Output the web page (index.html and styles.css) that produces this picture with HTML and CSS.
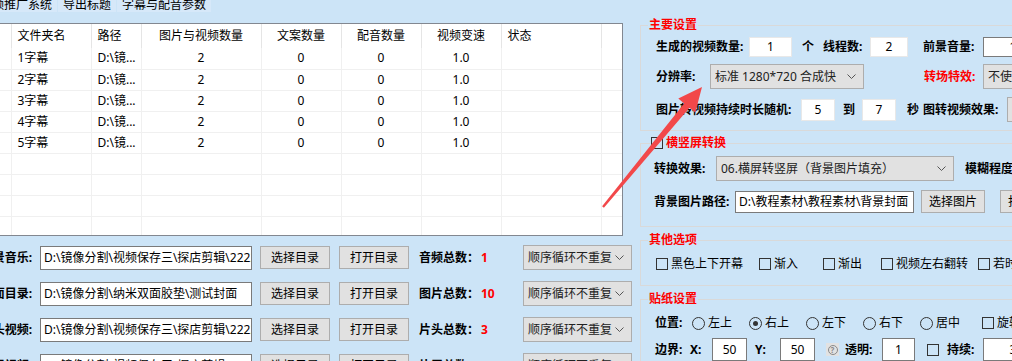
FILE: index.html
```html
<!DOCTYPE html>
<html lang="zh-CN">
<head>
  <meta charset="UTF-8" />
  <title>短视频批量合成</title>
  <link rel="stylesheet" href="styles.css">
</head>
<body>
<div class="app">

  <div class="left">
    <div class="tabs">
      <div class="tab tab-cut"><span>短视频推广系统</span></div>
      <div class="tab">导出标题</div>
      <div class="tab">字幕与配音参数</div>
    </div>

    <div class="grid">
      <table>
        <colgroup>
          <col class="c-head"><col class="c-name"><col class="c-path"><col class="c-media">
          <col class="c-num"><col class="c-num"><col class="c-num"><col class="c-state"><col class="c-fill">
        </colgroup>
        <thead>
          <tr>
            <th></th><th class="l">文件夹名</th><th class="l">路径</th><th>图片与视频数量</th>
            <th>文案数量</th><th>配音数量</th><th>视频变速</th><th class="l">状态</th><th class="fill"></th>
          </tr>
        </thead>
        <tbody>
          <tr><td></td><td class="l">1字幕</td><td class="l">D:\镜...</td><td>2</td><td>0</td><td>0</td><td>1.0</td><td></td><td class="fill"></td></tr>
          <tr><td></td><td class="l">2字幕</td><td class="l">D:\镜...</td><td>2</td><td>0</td><td>0</td><td>1.0</td><td></td><td class="fill"></td></tr>
          <tr><td></td><td class="l">3字幕</td><td class="l">D:\镜...</td><td>2</td><td>0</td><td>0</td><td>1.0</td><td></td><td class="fill"></td></tr>
          <tr><td></td><td class="l">4字幕</td><td class="l">D:\镜...</td><td>2</td><td>0</td><td>0</td><td>1.0</td><td></td><td class="fill"></td></tr>
          <tr><td></td><td class="l">5字幕</td><td class="l">D:\镜...</td><td>2</td><td>0</td><td>0</td><td>1.0</td><td></td><td class="fill"></td></tr>
          <tr><td></td><td></td><td></td><td></td><td></td><td></td><td></td><td></td><td class="fill"></td></tr>
          <tr><td></td><td></td><td></td><td></td><td></td><td></td><td></td><td></td><td class="fill"></td></tr>
          <tr><td></td><td></td><td></td><td></td><td></td><td></td><td></td><td></td><td class="fill"></td></tr>
          <tr><td></td><td></td><td></td><td></td><td></td><td></td><td></td><td></td><td class="fill"></td></tr>
          <tr><td></td><td></td><td></td><td></td><td></td><td></td><td></td><td></td><td class="fill"></td></tr>
        </tbody>
      </table>
    </div>

    <div class="dirs">
      <div class="dir">
        <span class="dir-label"><span>背景音乐:</span></span>
        <span class="tb text w212">D:\镜像分割\视频保存三\探店剪辑\2222</span>
        <span class="btn w70">选择目录</span>
        <span class="btn w70">打开目录</span>
        <span class="lbl">音频总数：</span>
        <span class="val">1</span>
        <span class="combo w109">顺序循环不重复<svg width="9" height="5" viewBox="0 0 9 5"><polyline points="0.5,0.5 4.5,4.5 8.5,0.5" fill="none" stroke="#555" stroke-width="1"/></svg></span>
      </div>
      <div class="dir">
        <span class="dir-label"><span>封面目录:</span></span>
        <span class="tb text w212">D:\镜像分割\纳米双面胶垫\测试封面</span>
        <span class="btn w70">选择目录</span>
        <span class="btn w70">打开目录</span>
        <span class="lbl">图片总数：</span>
        <span class="val">10</span>
        <span class="combo w109">顺序循环不重复<svg width="9" height="5" viewBox="0 0 9 5"><polyline points="0.5,0.5 4.5,4.5 8.5,0.5" fill="none" stroke="#555" stroke-width="1"/></svg></span>
      </div>
      <div class="dir">
        <span class="dir-label"><span>片头视频:</span></span>
        <span class="tb text w212">D:\镜像分割\视频保存三\探店剪辑\2222</span>
        <span class="btn w70">选择目录</span>
        <span class="btn w70">打开目录</span>
        <span class="lbl">片头总数：</span>
        <span class="val">3</span>
        <span class="combo w109">顺序循环不重复<svg width="9" height="5" viewBox="0 0 9 5"><polyline points="0.5,0.5 4.5,4.5 8.5,0.5" fill="none" stroke="#555" stroke-width="1"/></svg></span>
      </div>
      <div class="dir">
        <span class="dir-label"><span>片尾视频:</span></span>
        <span class="tb text w212">D:\镜像分割\视频保存三\探店剪辑\2222</span>
        <span class="btn w70">选择目录</span>
        <span class="btn w70">打开目录</span>
        <span class="lbl">片尾总数：</span>
        <span class="val">3</span>
        <span class="combo w109">顺序循环不重复<svg width="9" height="5" viewBox="0 0 9 5"><polyline points="0.5,0.5 4.5,4.5 8.5,0.5" fill="none" stroke="#555" stroke-width="1"/></svg></span>
      </div>
    </div>
  </div>

  <div class="right">
    <fieldset class="group g-main">
      <legend>主要设置</legend>
      <div class="frow r-count">
        <span class="lbl">生成的视频数量:</span>
        <span class="tb soft w43">1</span>
        <span class="lbl">个</span>
        <span class="lbl">线程数:</span>
        <span class="tb soft w38">2</span>
        <span class="lbl">前景音量:</span>
        <span class="tb w60">1</span>
      </div>
      <div class="frow r-res">
        <span class="lbl">分辨率:</span>
        <span class="combo w154">标准 1280*720 合成快<svg width="9" height="5" viewBox="0 0 9 5"><polyline points="0.5,0.5 4.5,4.5 8.5,0.5" fill="none" stroke="#555" stroke-width="1"/></svg></span>
        <span class="lbl red">转场特效:</span>
        <span class="combo w80">不使用</span>
      </div>
      <div class="frow r-dur">
        <span class="lbl">图片转视频持续时长随机:</span>
        <span class="tb soft w34">5</span>
        <span class="lbl">到</span>
        <span class="tb soft w34">7</span>
        <span class="lbl">秒</span>
        <span class="lbl">图转视频效果:</span>
        <span class="combo w80">无</span>
      </div>
    </fieldset>

    <fieldset class="group g-conv">
      <legend><span class="cb"></span>横竖屏转换</legend>
      <div class="frow r-effect">
        <span class="lbl">转换效果:</span>
        <span class="combo w238">06.横屏转竖屏（背景图片填充）<svg width="9" height="5" viewBox="0 0 9 5"><polyline points="0.5,0.5 4.5,4.5 8.5,0.5" fill="none" stroke="#555" stroke-width="1"/></svg></span>
        <span class="lbl">模糊程度:</span>
      </div>
      <div class="frow r-bg">
        <span class="lbl">背景图片路径:</span>
        <span class="tb text w179">D:\教程素材\教程素材\背景封面</span>
        <span class="btn w64">选择图片</span>
        <span class="btn w64">打开图片</span>
      </div>
    </fieldset>

    <fieldset class="group g-other">
      <legend>其他选项</legend>
      <div class="frow r-opts">
        <label class="opt"><span class="cb"></span>黑色上下开幕</label>
        <label class="opt"><span class="cb"></span>渐入</label>
        <label class="opt"><span class="cb"></span>渐出</label>
        <label class="opt"><span class="cb"></span>视频左右翻转</label>
        <label class="opt"><span class="cb"></span>若时长不足</label>
      </div>
    </fieldset>

    <fieldset class="group g-sticker">
      <legend>贴纸设置</legend>
      <div class="frow r-pos">
        <span class="lbl">位置:</span>
        <label class="opt"><span class="rb"></span>左上</label>
        <label class="opt"><span class="rb on"></span>右上</label>
        <label class="opt"><span class="rb"></span>左下</label>
        <label class="opt"><span class="rb"></span>右下</label>
        <label class="opt"><span class="rb"></span>居中</label>
        <label class="opt"><span class="cb"></span>旋转</label>
      </div>
      <div class="frow r-edge">
        <span class="lbl">边界:</span>
        <span class="lbl">X:</span>
        <span class="tb w35">50</span>
        <span class="lbl">Y:</span>
        <span class="tb w35">50</span>
        <span class="help"><span>?</span></span>
        <span class="lbl">透明:</span>
        <span class="tb w33">1</span>
        <span class="cb"></span>
        <span class="lbl">持续:</span>
        <span class="tb w60">3</span>
      </div>
    </fieldset>
  </div>

  <svg class="arrow" width="120" height="135" viewBox="0 0 120 135">
    <polygon points="12.1,126.2 94.1,23.4 88.3,18.6 112,7 105.3,32.6 99.5,27.8 13.9,127.8" fill="#f2484a"/>
  </svg>
</div>
</body>
</html>
```

FILE: styles.css
```css
* {
  box-sizing: border-box;
}

body {
  margin: 0;
  width: 1012px;
  height: 361px;
  overflow: hidden;
  background: #cce4f7;
  font-family: "Noto Sans", "Noto Sans CJK SC", sans-serif;
  font-size: 12px;
  line-height: 14px;
  color: #000;
}

.app {
  position: relative;
  display: flex;
}

.left {
  flex: none;
  width: 632px;
}

.right {
  flex: none;
  width: 420px;
  margin-left: 8px;
}

/* tab strip, cut at the top of the shot */
.tabs {
  display: flex;
  height: 15px;
  margin-top: -3px;
  margin-bottom: 11px;
  line-height: 15px;
}

.tab {
  padding: 0 5px;
  margin-right: 1px;
  background: #d6e8f9;
  white-space: nowrap;
}

.tab-cut {
  width: 57px;
  display: flex;
  justify-content: flex-end;
  overflow: hidden;
}

/* data grid */
.grid {
  margin-left: -1px;
  width: 624px;
  height: 213px;
  border: 1px solid #828790;
  background: #fff;
  overflow: hidden;
}

.grid table {
  width: 622px;
  border-collapse: collapse;
  table-layout: fixed;
}

.c-head { width: 11px; }
.c-name { width: 80px; }
.c-path { width: 50px; }
.c-media { width: 120px; }
.c-num { width: 80px; }
.c-state { width: 100px; }
.c-fill { width: 21px; }

.grid th {
  height: 24px;
  padding: 0;
  font-weight: normal;
  border-right: 1px solid #e5e5e5;
}

.grid td {
  height: 21px;
  padding: 0;
  text-align: center;
  border-right: 1px solid #f0f0f0;
  border-bottom: 1px solid #f0f0f0;
  white-space: nowrap;
  overflow: hidden;
}

.grid .l {
  text-align: left;
  padding-left: 6px;
}

.grid .fill {
  border-right: none;
}

/* directory rows under the grid */
.dirs {
  margin-top: 9px;
}

.dir {
  display: grid;
  grid-template-columns: 40px 220px 79px 80px 62px 42px 109px;
  align-items: center;
  justify-items: start;
  height: 25px;
  margin-bottom: 11px;
}

.dir-label {
  width: 32px;
  display: flex;
  justify-content: flex-end;
  overflow: hidden;
  white-space: nowrap;
  font-weight: bold;
}

.dir .tb {
  height: 24px;
  line-height: 22px;
}

.val {
  color: #f00;
  font-weight: bold;
}

/* controls */
.lbl {
  font-weight: bold;
  white-space: nowrap;
}

.red {
  color: #f00;
}

.tb {
  height: 22px;
  border: 1px solid #7a7a7a;
  background: #fff;
  line-height: 20px;
  text-align: center;
  white-space: nowrap;
  overflow: hidden;
}

.tb.soft {
  border-color: #e8e8e8;
}

.tb.text {
  text-align: left;
  padding-left: 3px;
}

.btn {
  height: 23px;
  border: 1px solid #adadad;
  background: #e1e1e1;
  line-height: 21px;
  text-align: center;
  white-space: nowrap;
}

.combo {
  height: 25px;
  display: flex;
  align-items: center;
  justify-content: space-between;
  padding: 0 7px 0 4px;
  border: 1px solid #adadad;
  background: #e1e1e1;
  color: #222;
  white-space: nowrap;
  overflow: hidden;
}

.combo svg {
  flex: none;
}

.w33 { width: 33px; }
.w34 { width: 34px; }
.w35 { width: 35px; }
.w38 { width: 38px; }
.w43 { width: 43px; }
.w60 { width: 60px; }
.w64 { width: 64px; }
.w70 { width: 70px; }
.w80 { width: 80px; }
.w109 { width: 109px; }
.w154 { width: 154px; }
.w179 { width: 179px; }
.w212 { width: 212px; }
.w238 { width: 238px; }

.cb {
  flex: none;
  display: inline-block;
  width: 12px;
  height: 12px;
  border: 1px solid #333;
}

.rb {
  flex: none;
  position: relative;
  display: inline-block;
  width: 13px;
  height: 13px;
  border: 1px solid #333;
  border-radius: 50%;
}

.rb.on::after {
  content: "";
  position: absolute;
  left: 3px;
  top: 3px;
  width: 5px;
  height: 5px;
  border-radius: 50%;
  background: #333;
}

.opt {
  display: flex;
  align-items: center;
  gap: 3px;
  white-space: nowrap;
}

.help {
  width: 13px;
  height: 13px;
  display: flex;
  align-items: center;
  justify-content: center;
  background: #e2e2e2;
}

.help span {
  width: 10px;
  height: 10px;
  border: 1px solid #8a8a8a;
  border-radius: 50%;
  color: #8a8a8a;
  font-size: 8px;
  line-height: 8px;
  font-weight: bold;
  text-align: center;
}

/* group boxes */
.group {
  width: 420px;
  min-width: 0;
  margin: 6px 0 0;
  padding: 0 0 10px 7px;
  border: 1px solid #d9d9d9;
}

.group legend {
  padding: 0 1px;
  line-height: 14px;
  font-weight: bold;
  color: #f00;
}

.frow {
  display: grid;
  align-items: center;
  justify-items: start;
  padding-left: 8px;
}

.g-main {
  margin-top: 18px;
  padding-bottom: 11px;
}

.r-count {
  height: 20px;
  margin-top: 5px;
  grid-template-columns: 93px 53px 21px 47px 53px 60px 60px;
}

.r-count .tb {
  height: 20px;
  line-height: 18px;
}

.r-res {
  height: 25px;
  margin-top: 7px;
  grid-template-columns: 54px 214px 59px 60px;
}

.r-dur {
  height: 22px;
  margin-top: 8px;
  grid-template-columns: 145px 42px 19px 45px 16px 84px 40px;
}

.g-conv {
  margin-top: 4px;
  padding-bottom: 13px;
}

.g-conv legend {
  display: flex;
  align-items: center;
  gap: 3px;
  margin-left: 2px;
  line-height: 16px;
}

.g-conv .frow {
  padding-left: 6px;
}

.r-effect {
  height: 25px;
  margin-top: 5px;
  grid-template-columns: 62px 249px 80px;
}

.r-bg {
  height: 23px;
  margin-top: 9px;
  grid-template-columns: 81px 186px 79px 64px;
}

.g-other {
  padding-bottom: 14px;
}

.r-opts {
  height: 14px;
  margin-top: 10px;
  grid-template-columns: 103px 64px 58px 97px 90px;
}

.g-sticker .frow {
  padding-left: 7px;
}

.r-pos {
  height: 20px;
  margin-top: 7px;
  grid-template-columns: 37px 57px 57px 57px 57px 62px 60px;
}

.r-edge {
  height: 23px;
  margin-top: 5px;
  grid-template-columns: 35px 22px 43px 25px 46px 19px 37px 45px 20px 36px 60px;
}

.r-edge .tb {
  height: 23px;
  line-height: 21px;
}

/* red pointer drawn over the shot */
.arrow {
  position: absolute;
  left: 590px;
  top: 80px;
}
```
